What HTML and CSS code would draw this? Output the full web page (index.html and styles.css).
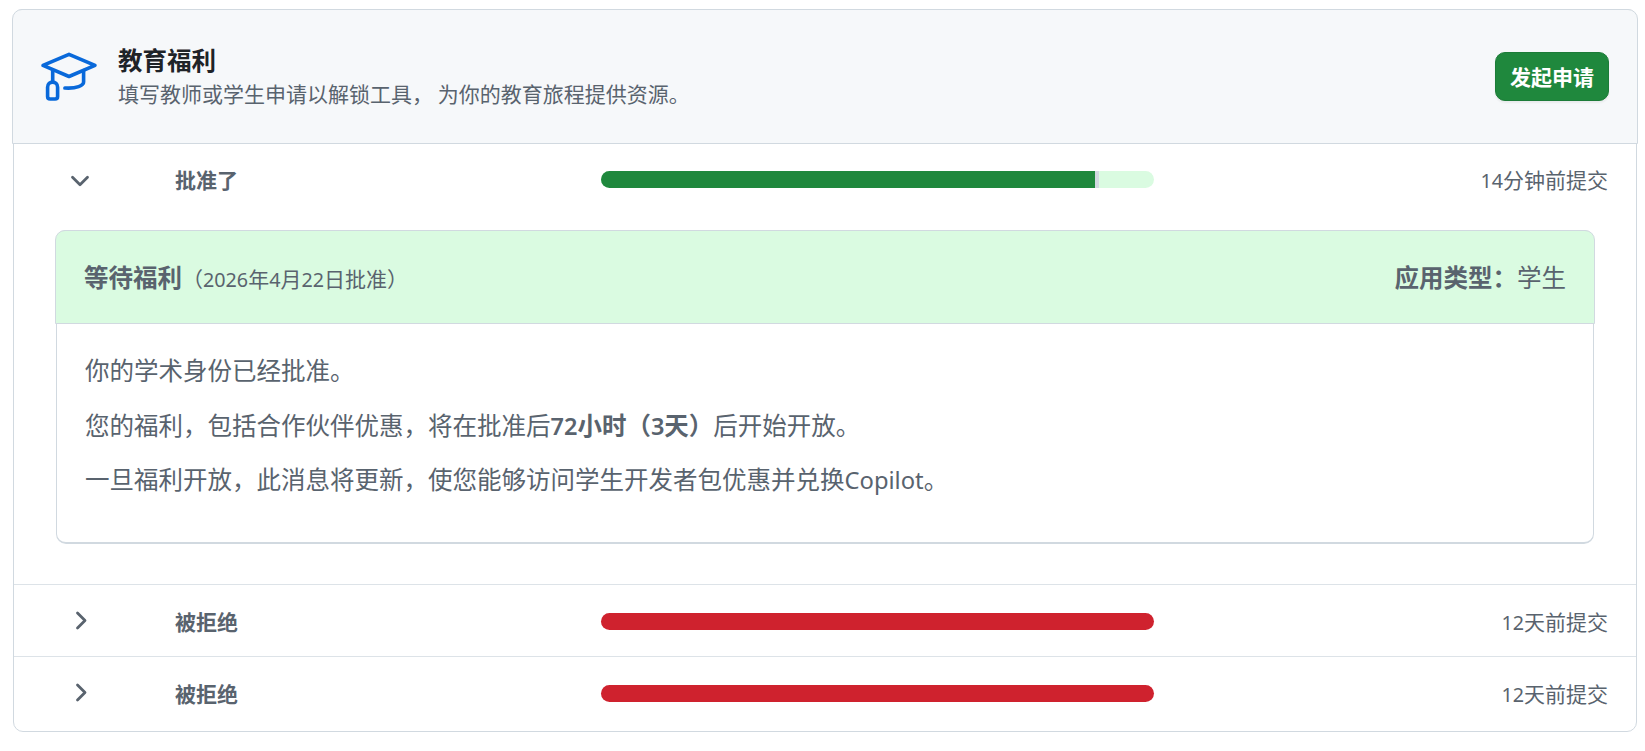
FILE: index.html
```html
<!DOCTYPE html>
<html lang="zh-CN">
<head>
    <meta charset="UTF-8">
    <meta name="viewport" content="width=device-width, initial-scale=1.0">
    <title>教育福利</title>
    <link rel="stylesheet" href="styles.css">
</head>
<body>
    <main class="box">
        <header class="box-header">
            <svg class="cap-icon" viewBox="0 0 60 54" fill="none" stroke="#0969da" stroke-width="3.6" stroke-linecap="round" stroke-linejoin="round">
                <path d="M30 4.300 56 15.400 30 26.500 4 15.400Z"/>
                <path d="M13.700 20v12M44.600 20.500V32c0 3.500-7 6.800-18.700 6"/>
                <path d="M8.600 37.200c0-6.800 10-6.800 10 0v9.300c0 1.500-1 2.500-2.500 2.500h-5c-1.500 0-2.500-1-2.500-2.500Z"/>
            </svg>
            <div class="box-heading">
                <h1>教育福利</h1>
                <p>填写教师或学生申请以解锁工具， 为你的教育旅程提供资源。</p>
            </div>
            <button type="button" class="btn-primary">发起申请</button>
        </header>

        <section class="request request-open">
            <div class="request-row">
                <svg class="chevron" viewBox="0 0 28 28"><path d="M6.500 12.200 14 19.700l7.500-7.500"/></svg>
                <strong class="status">批准了</strong>
                <div class="progress">
                    <span class="progress-done"></span>
                    <span class="progress-mark"></span>
                </div>
                <span class="submitted"><span class="num">14</span>分钟前提交</span>
            </div>

            <div class="detail">
                <div class="detail-header">
                    <div class="detail-title"><strong>等待福利</strong><small>（<span class="num">2026</span>年<span class="num">4</span>月<span class="num">22</span>日批准）</small></div>
                    <div><strong>应用类型：</strong>学生</div>
                </div>
                <div class="detail-body">
                    <p>你的学术身份已经批准。</p>
                    <p>您的福利，包括合作伙伴优惠，将在批准后<strong><span class="num">72</span>小时（<span class="num">3</span>天）</strong>后开始开放。</p>
                    <p>一旦福利开放，此消息将更新，使您能够访问学生开发者包优惠并兑换<span class="latin">Copilot</span>。</p>
                </div>
            </div>
        </section>

        <section class="request">
            <div class="request-row">
                <svg class="chevron" viewBox="0 0 28 28"><path d="M11.500 6l7.500 7.500-7.500 7.500"/></svg>
                <strong class="status">被拒绝</strong>
                <div class="progress progress-denied"></div>
                <span class="submitted"><span class="num">12</span>天前提交</span>
            </div>
        </section>

        <section class="request">
            <div class="request-row">
                <svg class="chevron" viewBox="0 0 28 28"><path d="M11.500 6l7.500 7.500-7.500 7.500"/></svg>
                <strong class="status">被拒绝</strong>
                <div class="progress progress-denied"></div>
                <span class="submitted"><span class="num">12</span>天前提交</span>
            </div>
        </section>
    </main>
</body>
</html>
```

FILE: styles.css
```css
* {
    box-sizing: border-box;
}

body {
    margin: 0;
    padding: 9px 8px 0 13px;
    background-color: #ffffff;
    color: #59636e;
    font-family: "Noto Sans CJK SC", sans-serif;
    font-size: 24.5px;
    line-height: 36px;
}

h1, p {
    margin: 0;
}

.num,
.latin {
    font-family: "Noto Sans", "Noto Sans CJK SC", sans-serif;
    font-size: 0.94em;
    line-height: 1;
}

.latin {
    font-size: 0.97em;
}

strong .num {
    font-weight: 600;
    font-size: 0.96em;
}

.box {
    height: 723px;
    border: 1px solid #d1d9e0;
    border-radius: 10px;
}

/* Los encabezados sobresalen 1px por cada lado */
.box-header {
    display: flex;
    align-items: center;
    height: 135px;
    margin: -1px -2px 0;
    padding: 0 28px 0 26px;
    background-color: #f6f8fa;
    border: 1px solid #d1d9e0;
    border-radius: 10px 10px 0 0;
}

.cap-icon {
    width: 60px;
    height: 54px;
}

.box-heading {
    flex: 1;
    margin-left: 19px;
    padding-bottom: 3px;
}

.box-heading h1 {
    color: #1f2328;
    font-size: 24.5px;
    line-height: 36px;
}

.box-heading p {
    font-size: 21px;
    line-height: 31px;
}

.btn-primary {
    width: 114px;
    height: 49px;
    padding: 0 0 2px;
    background-color: #1f883d;
    color: #ffffff;
    border: 1px solid #1c7c38;
    border-radius: 10px;
    box-shadow: 0 2px 2px rgba(31, 35, 40, 0.06);
    font-family: inherit;
    font-size: 21px;
    font-weight: 700;
}

/* Solicitudes */
.request {
    height: 72px;
    border-top: 1px solid #dde3e8;
}

.request-open {
    height: 440px;
    border-top: none;
}

.request-row {
    display: grid;
    grid-template-columns: 109px 426px 553px 1fr;
    align-items: center;
    height: 72px;
    padding: 0 28px 0 52px;
    font-size: 21px;
}

.request-open .request-row {
    height: 70px;
}

.chevron {
    width: 28px;
    height: 28px;
    fill: none;
    stroke: #59636e;
    stroke-width: 2.8;
    stroke-linecap: round;
    stroke-linejoin: round;
}

.progress {
    display: flex;
    height: 17px;
    background-color: #dafbe1;
    border-radius: 9px;
    overflow: hidden;
}

.progress-done {
    width: 494px;
    background-color: #1f883d;
}

.progress-mark {
    width: 4px;
    background-color: #d1d9e0;
}

.progress-denied {
    background-color: #cf222e;
}

.submitted {
    text-align: right;
}

/* Detalle de la solicitud */
.detail {
    height: 314px;
    margin: 16px 42px 0;
    border: 1px solid #d1d9e0;
    border-bottom-width: 2px;
    border-radius: 10px;
}

.detail-header {
    display: flex;
    justify-content: space-between;
    align-items: center;
    height: 94px;
    margin: -1px -2px 0;
    padding: 0 28px 0 28px;
    background-color: #dafbe1;
    border: 1px solid #d1d9e0;
    border-radius: 10px 10px 0 0;
}

.detail-title small {
    font-size: 21px;
}

.detail-body {
    padding: 28.4px 28px 28px;
}

.detail-body p {
    margin-bottom: 18.4px;
}
```
